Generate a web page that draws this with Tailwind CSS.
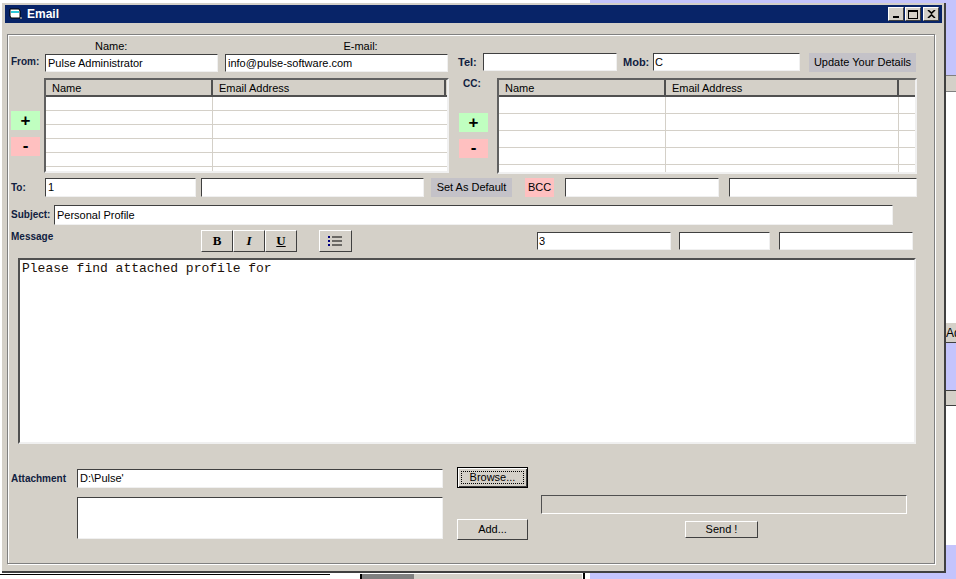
<!DOCTYPE html>
<html lang="en">
<head>
    <meta charset="UTF-8">
    <title>Email</title>
    <script src="https://cdn.jsdelivr.net/npm/@tailwindcss/browser@4"></script>
</head>
<body class="bg-white overflow-hidden">
<div class="relative w-[956px] h-[579px] overflow-hidden bg-white font-['Liberation_Sans',sans-serif] text-[12px] text-black">

    <!-- Desktop behind the window -->
    <div class="absolute left-[590px] top-0 w-[366px] h-[579px] bg-[#c4c4fc]"></div>
    <div class="absolute left-[946px] top-[75px] w-[10px] h-[17px] bg-[#d4d0c8] border-y border-[#808080]"></div>
    <div class="absolute left-[946px] top-[92px] w-[10px] h-[453px] bg-white"></div>
    <div class="absolute left-[946px] top-[323px] w-[10px] h-[20px] bg-[#d4d0c8] border-b border-[#404040] overflow-hidden leading-[20px]">Ad</div>
    <div class="absolute left-[946px] top-[343px] w-[10px] h-[47px] bg-[#c4c4fc]"></div>
    <div class="absolute left-[946px] top-[390px] w-[10px] h-[16px] bg-[#d4d0c8] border-y border-[#404040]"></div>
    <div class="absolute left-0 top-[574px] w-[330px] h-[5px] border-t border-black"></div>
    <div class="absolute left-[360px] top-[574px] w-[54px] h-[5px] bg-[#808080] border-l-2 border-black"></div>
    <div class="absolute left-[414px] top-[574px] w-[168px] h-[5px] bg-[#d4d0c8]"></div>
    <div class="absolute left-[583px] top-[572px] w-[2px] h-[7px] bg-black"></div>

    <!-- Email window -->
    <div class="absolute left-[2px] top-[3px] w-[944px] h-[570px] bg-[#d4d0c8] border-r-2 border-b-2 border-[#404040] pl-[3px] pt-[2px]">
        <div class="flex items-center h-[18px] w-[937px] bg-[#082468] pl-[3px] pr-[3px]">
            <svg width="16" height="16" viewBox="0 0 16 16" class="shrink-0">
                <path d="M2 3h9l1 2v7H3L2 10z" fill="#fff" stroke="#000"/>
                <path d="M3 5h8v2H3z" fill="#2cc8d8"/>
                <path d="M12 11h2v2h-2z" fill="#808080"/>
            </svg>
            <span class="ml-[3px] text-white font-bold text-[12px]">Email</span>
            <div class="ml-auto flex">
                <div class="w-[16px] h-[14px] bg-[#d4d0c8] border border-t-white border-l-white border-r-[#404040] border-b-[#404040] flex items-end justify-start pl-[4px] pb-[2px]"><div class="w-[6px] h-[2px] bg-black"></div></div>
                <div class="w-[16px] h-[14px] ml-[1px] bg-[#d4d0c8] border border-t-white border-l-white border-r-[#404040] border-b-[#404040] flex items-center justify-center"><div class="w-[10px] h-[9px] border border-t-2 border-black"></div></div>
                <div class="w-[16px] h-[14px] ml-[2px] bg-[#d4d0c8] border border-t-white border-l-white border-r-[#404040] border-b-[#404040] flex items-center justify-center">
                    <svg width="9" height="8" viewBox="0 0 9 8"><path d="M1 0l3.500 3.200L8 0M1 8l3.500-3.200L8 8" fill="none" stroke="#000" stroke-width="1.600"/></svg>
                </div>
            </div>
        </div>

        <!-- Group box -->
        <div class="relative mt-[11px] ml-[2px] w-[928px] h-[530px] border border-[#808080] shadow-[inset_1px_1px_0_#fff,1px_1px_0_#fff]">

            <div class="flex h-[18px] pt-[5px] leading-[13px] text-[11px]">
                <span class="ml-[87px]">Name:</span>
                <span class="ml-[216px]">E-mail:</span>
            </div>

            <!-- From row -->
            <div class="flex items-start">
                <span class="ml-[3px] w-[34px] font-bold text-[10px] text-[#102040] leading-[18px]">From:</span>
                <div class="w-[173px] h-[18px] mt-[1px] bg-white border border-t-[#404040] border-l-[#404040] border-r-[#f0f0f0] border-b-[#f0f0f0] pl-[2px] leading-[16px] text-[11px]">Pulse Administrator</div>
                <div class="ml-[7px] w-[223px] h-[18px] mt-[1px] bg-white border border-t-[#404040] border-l-[#404040] border-r-[#f0f0f0] border-b-[#f0f0f0] pl-[2px] leading-[16px] text-[11px]">info@pulse-software.com</div>
                <span class="ml-[10px] w-[25px] font-bold text-[11px] text-[#102040] leading-[18px]">Tel:</span>
                <div class="w-[134px] h-[18px] bg-white border border-t-[#404040] border-l-[#404040] border-r-[#f0f0f0] border-b-[#f0f0f0]"></div>
                <span class="ml-[6px] w-[30px] font-bold text-[11px] text-[#102040] leading-[18px]">Mob:</span>
                <div class="w-[147px] h-[18px] bg-white border border-t-[#404040] border-l-[#404040] border-r-[#f0f0f0] border-b-[#f0f0f0] pl-[1px] leading-[16px] text-[11px]">C</div>
                <div class="ml-[9px] w-[107px] h-[19px] bg-[#c4c2c8] text-center leading-[19px] text-[11px]">Update Your Details</div>
            </div>

            <!-- Contact lists -->
            <div class="flex items-start mt-[6px] h-[100px]">
                <div class="ml-[3px] w-[29px] pt-[33px]">
                    <div class="h-[19px] bg-[#c0ffc0] text-center font-bold text-[17px] leading-[19px]">+</div>
                    <div class="mt-[7px] h-[19px] bg-[#ffc0c0] text-center font-bold text-[17px] leading-[17px]">-</div>
                </div>
                <div class="ml-[4px] w-[405px] h-[95px] bg-white border-2 border-t-[#606060] border-l-[#606060] border-r-[#f0f0f0] border-b-[#f0f0f0] overflow-hidden">
                    <div class="flex h-[17px] bg-[#d4d0c8] border-b-2 border-[#505050] leading-[16px] text-[11px]">
                        <div class="w-[167px] pl-[6px] border-r-2 border-[#505050]">Name</div>
                        <div class="w-[233px] pl-[6px] border-r-2 border-[#505050]">Email Address</div>
                    </div>
                    <div class="h-[14px] flex border-b border-[#d4d0c8]"><div class="w-[167px] border-r border-[#d4d0c8]"></div></div>
                    <div class="h-[14px] flex border-b border-[#d4d0c8]"><div class="w-[167px] border-r border-[#d4d0c8]"></div></div>
                    <div class="h-[14px] flex border-b border-[#d4d0c8]"><div class="w-[167px] border-r border-[#d4d0c8]"></div></div>
                    <div class="h-[14px] flex border-b border-[#d4d0c8]"><div class="w-[167px] border-r border-[#d4d0c8]"></div></div>
                    <div class="h-[14px] flex border-b border-[#d4d0c8]"><div class="w-[167px] border-r border-[#d4d0c8]"></div></div>
                    <div class="h-[14px] flex"><div class="w-[167px] border-r border-[#d4d0c8]"></div></div>
                </div>
                <div class="ml-[10px] w-[29px]">
                    <div class="pl-[4px] pt-[0px] h-[35px] font-bold text-[10px] text-[#102040] leading-[11px]">CC:</div>
                    <div class="h-[19px] bg-[#c0ffc0] text-center font-bold text-[17px] leading-[19px]">+</div>
                    <div class="mt-[7px] h-[19px] bg-[#ffc0c0] text-center font-bold text-[17px] leading-[17px]">-</div>
                </div>
                <div class="ml-[9px] w-[420px] h-[96px] bg-white border-2 border-t-[#606060] border-l-[#606060] border-r-[#f0f0f0] border-b-[#f0f0f0] overflow-hidden">
                    <div class="flex h-[17px] bg-[#d4d0c8] border-b-2 border-[#505050] leading-[16px] text-[11px]">
                        <div class="w-[167px] pl-[6px] border-r-2 border-[#505050]">Name</div>
                        <div class="w-[233px] pl-[6px] border-r-2 border-[#505050]">Email Address</div>
                    </div>
                    <div class="h-[17px] flex border-b border-[#d4d0c8]"><div class="w-[167px] border-r border-[#d4d0c8]"></div><div class="w-[233px] border-r border-[#d4d0c8]"></div></div>
                    <div class="h-[17px] flex border-b border-[#d4d0c8]"><div class="w-[167px] border-r border-[#d4d0c8]"></div><div class="w-[233px] border-r border-[#d4d0c8]"></div></div>
                    <div class="h-[17px] flex border-b border-[#d4d0c8]"><div class="w-[167px] border-r border-[#d4d0c8]"></div><div class="w-[233px] border-r border-[#d4d0c8]"></div></div>
                    <div class="h-[17px] flex border-b border-[#d4d0c8]"><div class="w-[167px] border-r border-[#d4d0c8]"></div><div class="w-[233px] border-r border-[#d4d0c8]"></div></div>
                    <div class="h-[17px] flex"><div class="w-[167px] border-r border-[#d4d0c8]"></div><div class="w-[233px] border-r border-[#d4d0c8]"></div></div>
                </div>
            </div>

            <!-- To / BCC row -->
            <div class="flex items-start h-[27px]">
                <span class="ml-[3px] w-[34px] font-bold text-[10px] text-[#102040] leading-[19px]">To:</span>
                <div class="w-[151px] h-[19px] bg-white border border-t-[#404040] border-l-[#404040] border-r-[#f0f0f0] border-b-[#f0f0f0] pl-[2px] leading-[17px] text-[11px]">1</div>
                <div class="ml-[5px] w-[223px] h-[19px] bg-white border border-t-[#404040] border-l-[#404040] border-r-[#f0f0f0] border-b-[#f0f0f0]"></div>
                <div class="ml-[7px] w-[81px] h-[19px] bg-[#c4c2c8] text-center leading-[19px] text-[11px]">Set As Default</div>
                <div class="ml-[13px] w-[29px] h-[19px] bg-[#ffc0c0] text-center leading-[19px] text-[11px]">BCC</div>
                <div class="ml-[11px] w-[154px] h-[19px] bg-white border border-t-[#404040] border-l-[#404040] border-r-[#f0f0f0] border-b-[#f0f0f0]"></div>
                <div class="ml-[10px] w-[188px] h-[19px] bg-white border border-t-[#404040] border-l-[#404040] border-r-[#f0f0f0] border-b-[#f0f0f0]"></div>
            </div>

            <!-- Subject row -->
            <div class="flex items-start h-[25px]">
                <span class="ml-[3px] w-[43px] font-bold text-[10px] text-[#102040] leading-[20px]">Subject:</span>
                <div class="w-[839px] h-[20px] bg-white border border-t-[#404040] border-l-[#404040] border-r-[#f0f0f0] border-b-[#f0f0f0] pl-[2px] leading-[18px] text-[11px]">Personal Profile</div>
            </div>

            <!-- Message toolbar -->
            <div class="flex items-start h-[28px]">
                <span class="ml-[3px] w-[190px] font-bold text-[10px] text-[#102040] leading-[14px]">Message</span>
                <div class="flex">
                    <div class="w-[32px] h-[22px] flex items-center justify-center border border-t-white border-l-white border-r-[#404040] border-b-[#404040] font-['Liberation_Serif',serif] font-bold text-[13px]">B</div>
                    <div class="w-[32px] h-[22px] flex items-center justify-center border border-t-white border-l-white border-r-[#404040] border-b-[#404040] font-['Liberation_Serif',serif] font-bold italic text-[13px]">I</div>
                    <div class="w-[32px] h-[22px] flex items-center justify-center border border-t-white border-l-white border-r-[#404040] border-b-[#404040] font-['Liberation_Serif',serif] font-bold underline text-[13px]">U</div>
                </div>
                <div class="ml-[22px] w-[33px] h-[22px] flex items-center justify-center border border-t-white border-l-white border-r-[#404040] border-b-[#404040]">
                    <svg width="15" height="11" viewBox="0 0 15 11">
                        <path d="M0 0h2v2H0zM0 4h2v2H0zM0 8h2v2H0z" fill="#000080"/>
                        <path d="M4 1h10M4 5h10M4 9h10" stroke="#000" stroke-width="1"/>
                    </svg>
                </div>
                <div class="ml-[185px] mt-[2px] w-[134px] h-[18px] bg-white border border-t-[#404040] border-l-[#404040] border-r-[#f0f0f0] border-b-[#f0f0f0] pl-[1px] leading-[16px] text-[11px]">3</div>
                <div class="ml-[8px] mt-[2px] w-[91px] h-[18px] bg-white border border-t-[#404040] border-l-[#404040] border-r-[#f0f0f0] border-b-[#f0f0f0]"></div>
                <div class="ml-[9px] mt-[2px] w-[134px] h-[18px] bg-white border border-t-[#404040] border-l-[#404040] border-r-[#f0f0f0] border-b-[#f0f0f0]"></div>
            </div>

            <!-- Message body -->
            <div class="ml-[10px] w-[898px] h-[186px] bg-white border-2 border-t-[#505050] border-l-[#505050] border-r-[#f0f0f0] border-b-[#f0f0f0] pl-[2px] pt-[1px] font-['Liberation_Mono',monospace] text-[13px] leading-[16px] text-[#201008]">Please find attached profile for</div>

            <!-- Attachment area -->
            <div class="flex items-start mt-[23px]">
                <div class="ml-[3px] w-[66px] mt-[2px] font-bold text-[10px] text-[#102040] leading-[19px]">Attachment</div>
                <div class="mt-[2px]">
                    <div class="w-[366px] h-[19px] bg-white border border-t-[#404040] border-l-[#404040] border-r-[#f0f0f0] border-b-[#f0f0f0] pl-[2px] leading-[17px] text-[11px]">D:\Pulse'</div>
                    <div class="mt-[9px] w-[366px] h-[42px] bg-white border border-t-[#404040] border-l-[#404040] border-r-[#f0f0f0] border-b-[#f0f0f0]"></div>
                </div>
                <div class="ml-[14px]">
                    <div class="w-[71px] h-[21px] border border-black bg-[#d4d0c8] shadow-[inset_1px_1px_0_#fff,inset_-1px_-1px_0_#404040] p-[3px]">
                        <div class="h-full border border-dotted border-black text-center leading-[11px] text-[11px]">Browse...</div>
                    </div>
                    <div class="mt-[31px] w-[71px] h-[21px] border border-t-white border-l-white border-r-[#404040] border-b-[#404040] text-center leading-[19px] text-[11px]">Add...</div>
                </div>
                <div class="ml-[13px] mt-[28px]">
                    <div class="w-[366px] h-[19px] border border-t-[#505050] border-l-[#505050] border-r-white border-b-white"></div>
                    <div class="mt-[7px] ml-[144px] w-[73px] h-[17px] border border-t-white border-l-white border-r-[#404040] border-b-[#404040] text-center leading-[15px] text-[11px]">Send !</div>
                </div>
            </div>
        </div>
    </div>
</div>
</body>
</html>
